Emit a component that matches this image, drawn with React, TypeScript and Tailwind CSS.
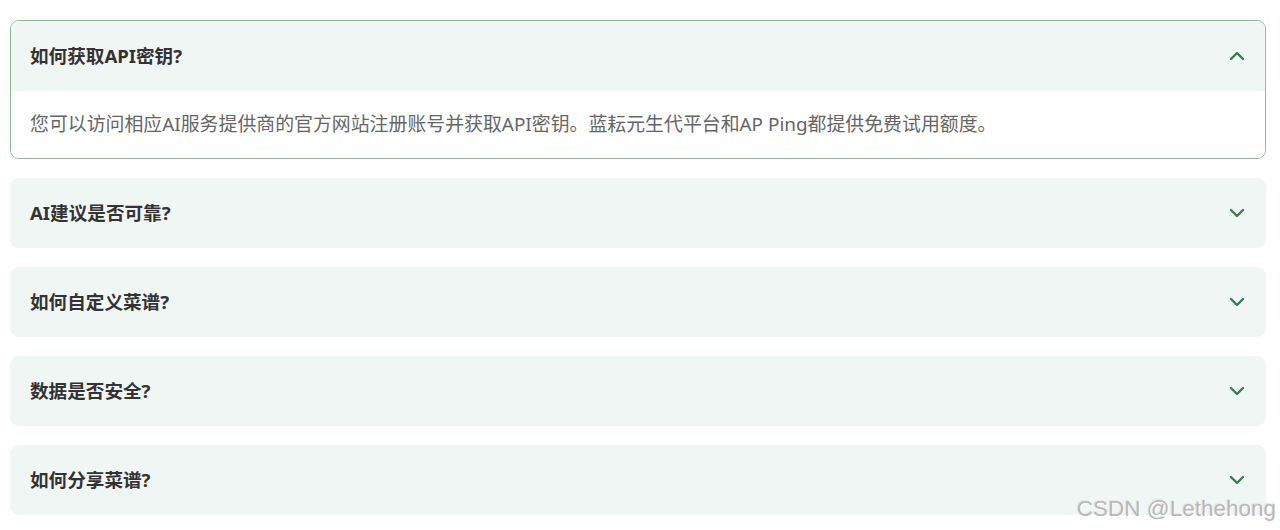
import React from "react";

const items = [
  {
    q: "如何获取API密钥?",
    a: "您可以访问相应AI服务提供商的官方网站注册账号并获取API密钥。蓝耘元生代平台和AP Ping都提供免费试用额度。",
    open: true,
  },
  { q: "AI建议是否可靠?" },
  { q: "如何自定义菜谱?" },
  { q: "数据是否安全?" },
  { q: "如何分享菜谱?" },
];

function Chevron({ up }: { up?: boolean }) {
  return (
    <svg width="24" height="24" viewBox="0 0 24 24" fill="none" stroke="#3b7a54" strokeWidth="2.4" strokeLinecap="round" strokeLinejoin="round">
      {up ? <polyline points="6 15 12 9 18 15" /> : <polyline points="6 9 12 15 18 9" />}
    </svg>
  );
}

export default function App() {
  return (
    <div
      className="relative w-[1280px] h-[530px] bg-white overflow-hidden"
      style={{ fontFamily: '"Noto Sans", "Noto Sans CJK SC", sans-serif' }}
    >
      <div className="flex flex-col gap-[19px] pt-5 pl-[10px] pr-[14px]">
        {items.map((it, i) =>
          it.open ? (
            <div key={i} className="rounded-[9px] border border-[#8dbb9c] overflow-hidden">
              <div className="flex items-center justify-between bg-[#f0f6f3] h-[70px] pl-[19px] pr-[16px]">
                <span className="text-[18.6px] font-bold text-[#333333]">{it.q}</span>
                <Chevron up />
              </div>
              <div className="bg-white h-[67px] flex items-center pl-[19px]">
                <span className="text-[18.9px] text-[#666666]">{it.a}</span>
              </div>
            </div>
          ) : (
            <div
              key={i}
              className="rounded-[9px] bg-[#f0f6f3] flex items-center justify-between h-[70px] pl-[20px] pr-[17px]"
            >
              <span className="text-[18.6px] font-bold text-[#333333]">{it.q}</span>
              <Chevron />
            </div>
          )
        )}
      </div>
      <div
        className="absolute right-[4px] bottom-[10px] text-[22.5px] text-[#b8b8b8] leading-none"
        style={{ fontFamily: '"Liberation Sans", Arial, sans-serif', textShadow: "1px 1px 0 #ffffff, -1px -1px 0 #e8e8e8" }}
      >
        CSDN @Lethehong
      </div>
    </div>
  );
}
